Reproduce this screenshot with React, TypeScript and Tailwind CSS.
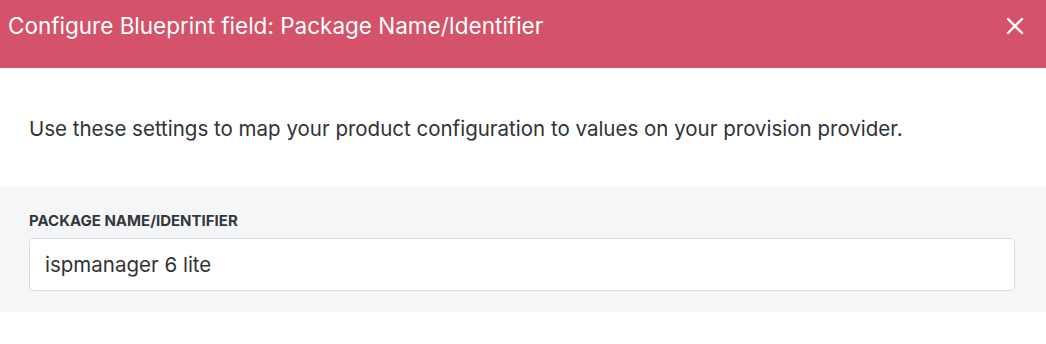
import React from "react";

export default function App() {
  return (
    <div className="w-[1046px] h-[344px] bg-white" style={{ fontFamily: 'Inter, "Liberation Sans", Arial, sans-serif' }}>
      <div className="h-[68px] bg-[#d4536a] flex items-start justify-between pl-[8px] pr-[21px] pt-[14px]">
        <h1 className="text-white text-[22.5px] leading-[24px]">Configure Blueprint field: Package Name/Identifier</h1>
        <svg width="20" height="20" viewBox="0 0 20 20" className="text-white mt-[2px]">
          <path d="M3 3L17 17M17 3L3 17" stroke="currentColor" strokeWidth="2.4" strokeLinecap="round" />
        </svg>
      </div>
      <div className="h-[119px] flex items-center px-[29px] pt-[4px]">
        <p className="text-[20.5px] text-[#2f3336]">Use these settings to map your product configuration to values on your provision provider.</p>
      </div>
      <div className="bg-[#f5f6f8] h-[125px] pl-[29px] pr-[31px] pt-[25px]">
        <div className="text-[15px] font-bold text-[#33373b] leading-[18px] mb-[8px]">PACKAGE NAME/IDENTIFIER</div>
        <div className="h-[53px] bg-white border border-[#d9dbde] rounded-[5px] flex items-center px-[15px] pt-[1px]">
          <span className="text-[20.5px] text-[#333]">ispmanager 6 lite</span>
        </div>
      </div>
    </div>
  );
}
